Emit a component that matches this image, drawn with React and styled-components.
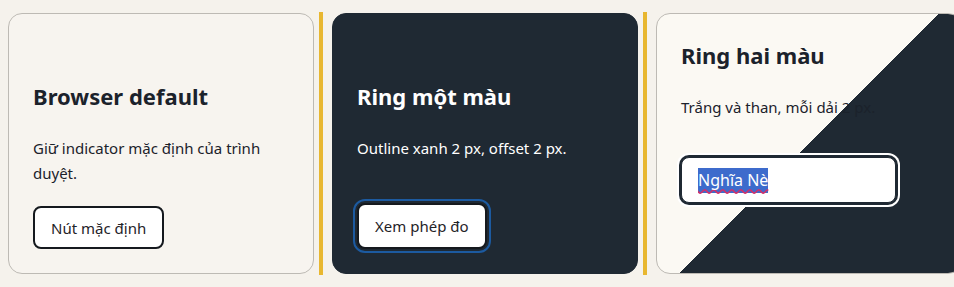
import styled, { createGlobalStyle } from "styled-components";

const GlobalStyle = createGlobalStyle`
  html, body {
    margin: 0;
    padding: 0;
    background: #f5f2ec;
    overflow: hidden;
  }
  body {
    font-family: "Noto Sans", "Open Sans", sans-serif;
    color: #1b222b;
  }
`;

const Page = styled.div`
  width: 954px;
  height: 287px;
  overflow: hidden;
  padding: 13px 0 0 8px;
  box-sizing: border-box;
`;

const Row = styled.div`
  display: flex;
  align-items: stretch;
  height: 261px;
`;

const Divider = styled.div`
  flex: 0 0 4px;
  margin: -1px 9px -1px 5px;
  background: #e8b730;
`;

const Card = styled.section`
  flex: 0 0 306px;
  box-sizing: border-box;
  display: flex;
  flex-direction: column;
  align-items: flex-start;
  padding: ${(p) => p.$top}px 24px 24px;
  border-radius: 14px;
  border: 1px solid ${(p) => (p.$tone === "dark" ? "#1f2933" : "#bdbab4")};
  background: ${(p) =>
    p.$tone === "dark"
      ? "#1f2933"
      : p.$tone === "split"
      ? "linear-gradient(135deg, #fbf9f3 50%, #1f2933 50%)"
      : "#f7f4ef"};
  color: ${(p) => (p.$tone === "dark" ? "#ffffff" : "#1b222b")};
`;

const Title = styled.h2`
  margin: 0 0 25px;
  font-size: 22px;
  line-height: 29px;
  font-weight: 700;
  color: inherit;
`;

const Desc = styled.p`
  margin: 0 0 20px;
  font-size: 15px;
  line-height: 25px;
  color: inherit;
`;

const Button = styled.button`
  margin-top: auto;
  height: 46px;
  padding: 0 16px;
  box-sizing: border-box;
  background: #ffffff;
  border: 2px solid #15191e;
  border-radius: 8px;
  font-family: inherit;
  font-size: 15px;
  color: #1f2328;
  cursor: pointer;
  outline: ${(p) => (p.$ring ? "2px solid #1c5aa0" : "none")};
  outline-offset: 2px;
`;

const Field = styled.div`
  margin-top: 17px;
  width: 215px;
  height: 46px;
  box-sizing: border-box;
  display: flex;
  align-items: center;
  padding: 0 16px;
  background: #ffffff;
  border: 1px solid #1f2933;
  border-radius: 8px;
  box-shadow: 0 0 0 2px #1f2933, 0 0 0 4px #ffffff;
  font-size: 16px;
`;

const Selected = styled.span`
  background: #3d6bcc;
  color: #ffffff;
  line-height: 25px;
  text-decoration: underline wavy #d0306a;
  text-decoration-skip-ink: none;
  text-underline-offset: 3px;
`;

export default function App() {
  return (
    <>
      <GlobalStyle />
      <Page>
        <Row>
          <Card $top={68}>
            <Title>Browser default</Title>
            <Desc>Giữ indicator mặc định của trình duyệt.</Desc>
            <Button>Nút mặc định</Button>
          </Card>
          <Divider />
          <Card $top={68} $tone="dark">
            <Title>Ring một màu</Title>
            <Desc>Outline xanh 2 px, offset 2 px.</Desc>
            <Button $ring>Xem phép đo</Button>
          </Card>
          <Divider />
          <Card $top={27} $tone="split">
            <Title>Ring hai màu</Title>
            <Desc>Trắng và than, mỗi dải 2 px.</Desc>
            <Field>
              <Selected>Nghĩa Nè</Selected>
            </Field>
          </Card>
        </Row>
      </Page>
    </>
  );
}
